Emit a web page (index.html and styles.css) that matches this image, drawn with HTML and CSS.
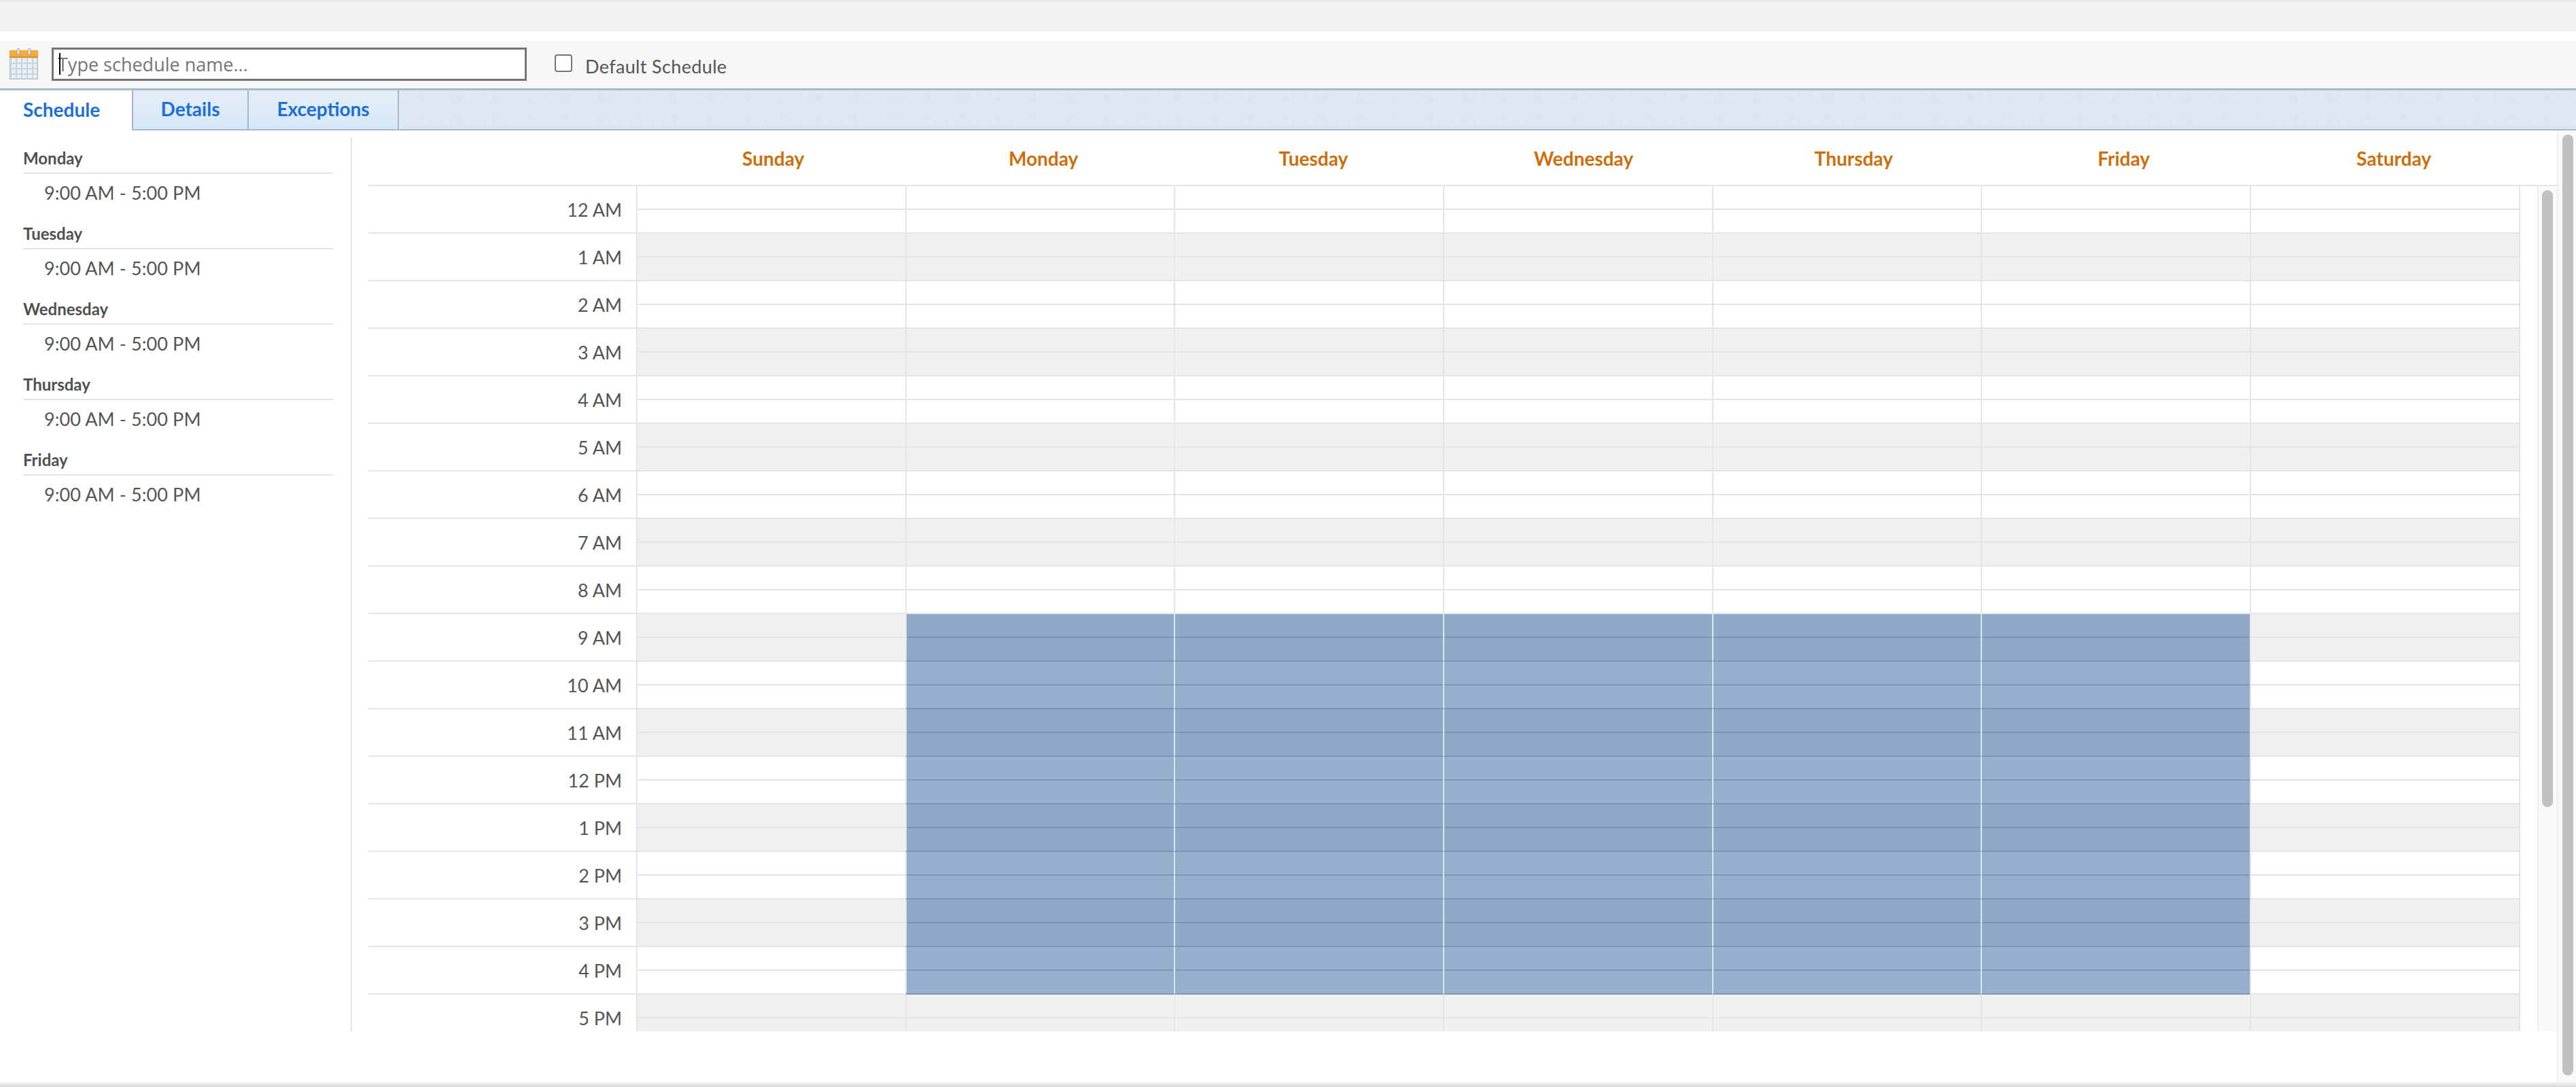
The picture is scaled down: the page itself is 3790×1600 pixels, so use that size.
FILE: index.html
```html
<!DOCTYPE html>
<html lang="en">
<head>
<meta charset="utf-8">
<title>Schedule</title>
<link rel="stylesheet" href="styles.css">
</head>
<body>
<div class="top-band"></div>
<div class="toolbar">
  <svg class="cal-icon" width="42" height="46" viewBox="0 0 42 46">
    <rect x="0.5" y="12" width="41" height="33.5" fill="#c6d6e0" stroke="#b0c3d1"/>
    <g fill="#eaf1f6">
      <rect x="3" y="15" width="6" height="6"/><rect x="11" y="15" width="6" height="6"/><rect x="19" y="15" width="6" height="6"/><rect x="27" y="15" width="6" height="6"/><rect x="35" y="15" width="5" height="6"/>
      <rect x="3" y="23" width="6" height="6"/><rect x="11" y="23" width="6" height="6"/><rect x="19" y="23" width="6" height="6"/><rect x="27" y="23" width="6" height="6"/><rect x="35" y="23" width="5" height="6"/>
      <rect x="3" y="31" width="6" height="6"/><rect x="11" y="31" width="6" height="6"/><rect x="19" y="31" width="6" height="6"/><rect x="27" y="31" width="6" height="6"/><rect x="35" y="31" width="5" height="6"/>
      <rect x="3" y="39" width="6" height="5"/><rect x="11" y="39" width="6" height="5"/><rect x="19" y="39" width="6" height="5"/><rect x="27" y="39" width="6" height="5"/><rect x="35" y="39" width="5" height="5"/>
    </g>
    <rect x="0" y="3" width="42" height="11" fill="#f6a83a"/>
    <rect x="0" y="12" width="42" height="2" fill="#e08f22"/>
    <g fill="#f0e6d6" stroke="#a5a29b" stroke-width="1">
      <rect x="11" y="0.5" width="4" height="9" rx="2"/>
      <rect x="27" y="0.5" width="4" height="9" rx="2"/>
    </g>
  </svg>
  <div class="name-field">
    <input class="name-input" type="text" placeholder="Type schedule name...">
    <span class="caret"></span>
  </div>
  <label class="default-label"><input class="default-check" type="checkbox"><span>Default Schedule</span></label>
</div>
<div class="tabs">
  <div class="tab tab-active">Schedule</div>
  <div class="tab tab-details">Details</div>
  <div class="tab tab-exceptions">Exceptions</div>
</div>
<div class="pane">
  <div class="pane-main">
    <div class="pane-body">
      <aside class="sidebar">
        <div class="day-head">Monday</div><div class="day-time">9:00 AM - 5:00 PM</div>
        <div class="day-head">Tuesday</div><div class="day-time">9:00 AM - 5:00 PM</div>
        <div class="day-head">Wednesday</div><div class="day-time">9:00 AM - 5:00 PM</div>
        <div class="day-head">Thursday</div><div class="day-time">9:00 AM - 5:00 PM</div>
        <div class="day-head">Friday</div><div class="day-time">9:00 AM - 5:00 PM</div>
      </aside>
      <section class="schedule">
        <div class="week-head">
          <div></div>
          <div class="week-day">Sunday</div><div class="week-day">Monday</div><div class="week-day">Tuesday</div><div class="week-day">Wednesday</div><div class="week-day">Thursday</div><div class="week-day">Friday</div><div class="week-day">Saturday</div>
        </div>
        <div class="grid-wrap">
          <div class="rows">
            <div class="row"><div class="time">12 AM</div><div class="cell"></div><div class="cell"></div><div class="cell"></div><div class="cell"></div><div class="cell"></div><div class="cell"></div><div class="cell"></div></div>
            <div class="row"><div class="time">1 AM</div><div class="cell"></div><div class="cell"></div><div class="cell"></div><div class="cell"></div><div class="cell"></div><div class="cell"></div><div class="cell"></div></div>
            <div class="row"><div class="time">2 AM</div><div class="cell"></div><div class="cell"></div><div class="cell"></div><div class="cell"></div><div class="cell"></div><div class="cell"></div><div class="cell"></div></div>
            <div class="row"><div class="time">3 AM</div><div class="cell"></div><div class="cell"></div><div class="cell"></div><div class="cell"></div><div class="cell"></div><div class="cell"></div><div class="cell"></div></div>
            <div class="row"><div class="time">4 AM</div><div class="cell"></div><div class="cell"></div><div class="cell"></div><div class="cell"></div><div class="cell"></div><div class="cell"></div><div class="cell"></div></div>
            <div class="row"><div class="time">5 AM</div><div class="cell"></div><div class="cell"></div><div class="cell"></div><div class="cell"></div><div class="cell"></div><div class="cell"></div><div class="cell"></div></div>
            <div class="row"><div class="time">6 AM</div><div class="cell"></div><div class="cell"></div><div class="cell"></div><div class="cell"></div><div class="cell"></div><div class="cell"></div><div class="cell"></div></div>
            <div class="row"><div class="time">7 AM</div><div class="cell"></div><div class="cell"></div><div class="cell"></div><div class="cell"></div><div class="cell"></div><div class="cell"></div><div class="cell"></div></div>
            <div class="row"><div class="time">8 AM</div><div class="cell"></div><div class="cell"></div><div class="cell"></div><div class="cell"></div><div class="cell"></div><div class="cell"></div><div class="cell"></div></div>
            <div class="row"><div class="time">9 AM</div><div class="cell"></div><div class="cell on first"></div><div class="cell on"></div><div class="cell on"></div><div class="cell on"></div><div class="cell on"></div><div class="cell"></div></div>
            <div class="row"><div class="time">10 AM</div><div class="cell"></div><div class="cell on first"></div><div class="cell on"></div><div class="cell on"></div><div class="cell on"></div><div class="cell on"></div><div class="cell"></div></div>
            <div class="row"><div class="time">11 AM</div><div class="cell"></div><div class="cell on first"></div><div class="cell on"></div><div class="cell on"></div><div class="cell on"></div><div class="cell on"></div><div class="cell"></div></div>
            <div class="row"><div class="time">12 PM</div><div class="cell"></div><div class="cell on first"></div><div class="cell on"></div><div class="cell on"></div><div class="cell on"></div><div class="cell on"></div><div class="cell"></div></div>
            <div class="row"><div class="time">1 PM</div><div class="cell"></div><div class="cell on first"></div><div class="cell on"></div><div class="cell on"></div><div class="cell on"></div><div class="cell on"></div><div class="cell"></div></div>
            <div class="row"><div class="time">2 PM</div><div class="cell"></div><div class="cell on first"></div><div class="cell on"></div><div class="cell on"></div><div class="cell on"></div><div class="cell on"></div><div class="cell"></div></div>
            <div class="row"><div class="time">3 PM</div><div class="cell"></div><div class="cell on first"></div><div class="cell on"></div><div class="cell on"></div><div class="cell on"></div><div class="cell on"></div><div class="cell"></div></div>
            <div class="row"><div class="time">4 PM</div><div class="cell"></div><div class="cell on first"></div><div class="cell on"></div><div class="cell on"></div><div class="cell on"></div><div class="cell on"></div><div class="cell"></div></div>
            <div class="row"><div class="time">5 PM</div><div class="cell"></div><div class="cell"></div><div class="cell"></div><div class="cell"></div><div class="cell"></div><div class="cell"></div><div class="cell"></div></div>
          </div>
          <div class="inner-scroll"><div class="inner-thumb"></div></div>
        </div>
      </section>
    </div>
  </div>
  <div class="outer-scroll"><div class="outer-thumb"></div></div>
</div>
<div class="page-foot"></div>
</body>
</html>
```
FILE: styles.css
```css
* { box-sizing: border-box; }
html, body { margin: 0; padding: 0; }
body {
  width: 3790px;
  height: 1600px;
  overflow: hidden;
  background: #fff;
  color: #555;
  font-family: Lato, "Liberation Sans", sans-serif;
  display: flex;
  flex-direction: column;
}
.top-band {
  height: 46px;
  margin-bottom: 14px;
  background: linear-gradient(#e6e6e6, #f2f2f2 5px);
}
.toolbar {
  height: 70px;
  background: #f6f6f6;
  display: flex;
  align-items: flex-start;
  padding: 10px 0 0 14px;
}
.cal-icon { flex: none; margin-top: 1px; }
.name-field {
  position: relative;
  margin-left: 20px;
  width: 699px;
  height: 49px;
}
.name-input {
  display: block;
  width: 100%;
  height: 100%;
  border: 3px solid #757575;
  border-radius: 0;
  background: #fff;
  padding: 0 0 0 6px;
  margin: 0;
  outline: none;
  font-family: "Open Sans", sans-serif;
  font-size: 27px;
}
.name-input::placeholder { color: #757575; opacity: 1; }
.caret {
  position: absolute;
  left: 11px;
  top: 8px;
  width: 2px;
  height: 32px;
  background: #000;
}
.default-label {
  display: flex;
  align-items: center;
  margin-left: 41px;
  height: 46px;
  font-size: 27px;
  letter-spacing: 0.35px;
  color: #555;
}
.default-check {
  appearance: none;
  width: 26px;
  height: 26px;
  margin: 0 19px 0 0;
  background: #fff;
  border: 2px solid #767676;
  border-radius: 4px;
}
.default-label span { position: relative; top: 4px; }
.tabs {
  height: 62px;
  display: flex;
  border-top: 3px solid #a6bacd;
  border-bottom: 2px solid #a3b8cc;
  background-color: #dde7f1;
  background-image:
    radial-gradient(circle at 6px 9px, rgba(255,255,255,.12) 3px, transparent 5px),
    radial-gradient(circle at 24px 27px, rgba(255,255,255,.09) 4px, transparent 6px),
    radial-gradient(circle at 38px 12px, rgba(190,205,222,.1) 3px, transparent 5px);
  background-size: 31px 37px, 47px 41px, 53px 29px;
}
.tab {
  display: flex;
  align-items: center;
  justify-content: center;
  height: 57px;
  padding-bottom: 4px;
  font-size: 28px;
  font-weight: 700;
  color: #1b6fd8;
  background: linear-gradient(#e5eef6, #d6e7f8);
  border-right: 2px solid #a3b8cc;
}
.tab-active {
  width: 194px;
  height: 59px;
  margin-bottom: -2px;
  padding-left: 34px;
  justify-content: flex-start;
  background: #fff;
  border-right: 0;
}
.tab-details { width: 172px; border-left: 2px solid #a3b8cc; border-bottom-left-radius: 3px; }
.tab-exceptions { width: 221px; }
.pane {
  flex: 1;
  display: flex;
  min-height: 0;
}
.pane-main { flex: 1; background: #fff; }
.pane-body {
  height: 1326px;
  display: flex;
  align-items: stretch;
}
.sidebar {
  width: 518px;
  margin-top: 10px;
  padding: 9px 26px 0 34px;
  border-right: 2px solid #e4e4e4;
}
.day-head {
  height: 45px;
  line-height: 44px;
  border-bottom: 2px solid #e4e4e4;
  font-size: 24px;
  font-weight: 700;
  color: #505050;
}
.day-time {
  height: 66px;
  line-height: 55px;
  padding-left: 31px;
  font-size: 27px;
  letter-spacing: 0.1px;
  color: #555;
}
.schedule {
  margin-left: 24px;
  width: 3220px;
  display: flex;
  flex-direction: column;
}
.week-head {
  height: 82px;
  flex: none;
  display: grid;
  grid-template-columns: 397px repeat(7, 397.4px);
  align-items: center;
  border-bottom: 2px solid #e4e4e4;
}
.week-day {
  text-align: center;
  padding-top: 2px;
  font-size: 28px;
  font-weight: 700;
  color: #cc6f0a;
}
.grid-wrap {
  flex: 1;
  min-height: 0;
  display: flex;
  justify-content: space-between;
}
.rows {
  width: 3166px;
  height: 100%;
  overflow: hidden;
  border-right: 2px solid #e4e4e4;
}
.row {
  --bg: #fff;
  --on: #96afcd;
  height: 70px;
  display: grid;
  grid-template-columns: 394px repeat(7, 395.7px);
}
.row:nth-child(even) { --bg: #f0f0f0; --on: #8fa8c7; }
.time {
  height: 70px;
  padding-right: 21px;
  text-align: right;
  line-height: 70px;
  font-size: 27px;
  color: #555;
  border-bottom: 2px solid #e4e4e4;
}
.cell {
  height: 70px;
  --line: #e4e4e4;
  background:
    linear-gradient(var(--line), var(--line)) 0 33px / 100% 2px no-repeat,
    var(--bg);
  border-left: 2px solid #e4e4e4;
  border-bottom: 2px solid var(--line);
}
.cell.on {
  --line: #7c96b8;
  background:
    linear-gradient(var(--line), var(--line)) 0 33px / 100% 2px no-repeat,
    var(--on);
  border-left-color: #dbe6f3;
}
.cell.first { border-left-color: #e4e4e4; }
.inner-scroll {
  width: 29px;
  height: 100%;
  background: #f9f9f9;
  border-left: 2px solid #eee;
  overflow: hidden;
  padding: 6px 0 0 5px;
}
.inner-thumb {
  width: 16px;
  height: 908px;
  border-radius: 8px;
  background: #c1c1c1;
}
.outer-scroll {
  width: 28px;
  flex: none;
  background: #f9f9f9;
  border-left: 2px solid #eee;
  padding: 6px 0 0 6px;
}
.outer-thumb {
  width: 16px;
  height: 1385px;
  border-radius: 8px;
  background: #c1c1c1;
}
.page-foot {
  height: 7px;
  flex: none;
  background: linear-gradient(#f2f2f2, #d9d9d9);
}
```
